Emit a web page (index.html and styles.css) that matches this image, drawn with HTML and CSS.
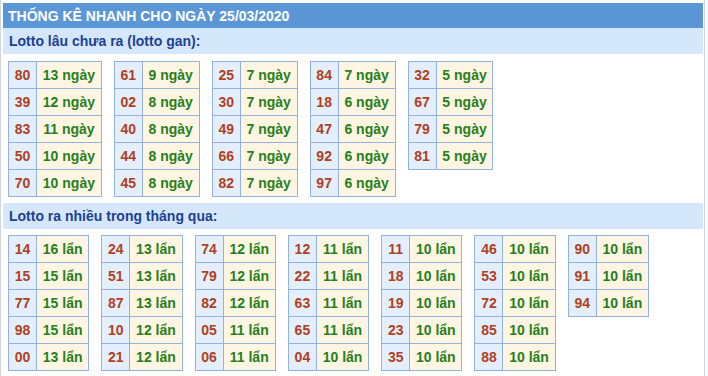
FILE: index.html
```html
<!DOCTYPE html>
<html lang="vi">
<head>
<meta charset="utf-8">
<title>Thống kê nhanh</title>
<link rel="stylesheet" href="styles.css">
</head>
<body>
<div class="wrap">
  <div class="title">THỐNG KÊ NHANH CHO NGÀY 25/03/2020</div>
  <div class="sub">Lotto lâu chưa ra (lotto gan):</div>
  <div class="tables">
    <table class="t"><tr><td class="n">80</td><td class="v">13 ngày</td></tr><tr><td class="n">39</td><td class="v">12 ngày</td></tr><tr><td class="n">83</td><td class="v">11 ngày</td></tr><tr><td class="n">50</td><td class="v">10 ngày</td></tr><tr><td class="n">70</td><td class="v">10 ngày</td></tr></table>
    <table class="t"><tr><td class="n">61</td><td class="v">9 ngày</td></tr><tr><td class="n">02</td><td class="v">8 ngày</td></tr><tr><td class="n">40</td><td class="v">8 ngày</td></tr><tr><td class="n">44</td><td class="v">8 ngày</td></tr><tr><td class="n">45</td><td class="v">8 ngày</td></tr></table>
    <table class="t"><tr><td class="n">25</td><td class="v">7 ngày</td></tr><tr><td class="n">30</td><td class="v">7 ngày</td></tr><tr><td class="n">49</td><td class="v">7 ngày</td></tr><tr><td class="n">66</td><td class="v">7 ngày</td></tr><tr><td class="n">82</td><td class="v">7 ngày</td></tr></table>
    <table class="t"><tr><td class="n">84</td><td class="v">7 ngày</td></tr><tr><td class="n">18</td><td class="v">6 ngày</td></tr><tr><td class="n">47</td><td class="v">6 ngày</td></tr><tr><td class="n">92</td><td class="v">6 ngày</td></tr><tr><td class="n">97</td><td class="v">6 ngày</td></tr></table>
    <table class="t"><tr><td class="n">32</td><td class="v">5 ngày</td></tr><tr><td class="n">67</td><td class="v">5 ngày</td></tr><tr><td class="n">79</td><td class="v">5 ngày</td></tr><tr><td class="n">81</td><td class="v">5 ngày</td></tr></table>
  </div>
  <div class="sub sub2">Lotto ra nhiều trong tháng qua:</div>
  <div class="tables">
    <table class="t"><tr><td class="n">14</td><td class="v">16 lẩn</td></tr><tr><td class="n">15</td><td class="v">15 lẩn</td></tr><tr><td class="n">77</td><td class="v">15 lẩn</td></tr><tr><td class="n">98</td><td class="v">15 lẩn</td></tr><tr><td class="n">00</td><td class="v">13 lẩn</td></tr></table>
    <table class="t"><tr><td class="n">24</td><td class="v">13 lẩn</td></tr><tr><td class="n">51</td><td class="v">13 lẩn</td></tr><tr><td class="n">87</td><td class="v">13 lẩn</td></tr><tr><td class="n">10</td><td class="v">12 lẩn</td></tr><tr><td class="n">21</td><td class="v">12 lẩn</td></tr></table>
    <table class="t"><tr><td class="n">74</td><td class="v">12 lẩn</td></tr><tr><td class="n">79</td><td class="v">12 lẩn</td></tr><tr><td class="n">82</td><td class="v">12 lẩn</td></tr><tr><td class="n">05</td><td class="v">11 lẩn</td></tr><tr><td class="n">06</td><td class="v">11 lẩn</td></tr></table>
    <table class="t"><tr><td class="n">12</td><td class="v">11 lẩn</td></tr><tr><td class="n">22</td><td class="v">11 lẩn</td></tr><tr><td class="n">63</td><td class="v">11 lẩn</td></tr><tr><td class="n">65</td><td class="v">11 lẩn</td></tr><tr><td class="n">04</td><td class="v">10 lẩn</td></tr></table>
    <table class="t"><tr><td class="n">11</td><td class="v">10 lẩn</td></tr><tr><td class="n">18</td><td class="v">10 lẩn</td></tr><tr><td class="n">19</td><td class="v">10 lẩn</td></tr><tr><td class="n">23</td><td class="v">10 lẩn</td></tr><tr><td class="n">35</td><td class="v">10 lẩn</td></tr></table>
    <table class="t"><tr><td class="n">46</td><td class="v">10 lẩn</td></tr><tr><td class="n">53</td><td class="v">10 lẩn</td></tr><tr><td class="n">72</td><td class="v">10 lẩn</td></tr><tr><td class="n">85</td><td class="v">10 lẩn</td></tr><tr><td class="n">88</td><td class="v">10 lẩn</td></tr></table>
    <table class="t"><tr><td class="n">90</td><td class="v">10 lẩn</td></tr><tr><td class="n">91</td><td class="v">10 lẩn</td></tr><tr><td class="n">94</td><td class="v">10 lẩn</td></tr></table>
  </div>
</div>
</body>
</html>
```

FILE: styles.css
```css
html, body {
  margin: 0;
  padding: 0;
  background: #ffffff;
}
body {
  font-family: "Liberation Sans", Arial, sans-serif;
  font-size: 14px;
  font-weight: bold;
}
.wrap {
  width: 700px;
  min-height: 376px;
  box-sizing: content-box;
  padding: 3px 1px 0 2px;
  border-left: 1px solid #cfd5dd;
  border-right: 1px solid #cfd5dd;
}
.title {
  height: 25px;
  line-height: 26px;
  background: #5b97d6;
  color: #ffffff;
  padding-left: 5px;
}
.sub {
  height: 26px;
  line-height: 26px;
  background: #d5e8fb;
  color: #1d3f95;
  padding-left: 6px;
}
.sub2 {
  margin-top: 6px;
}
.tables {
  display: flex;
  align-items: flex-start;
  gap: 12px;
  padding-left: 5px;
  margin-top: 7px;
}
.sub2 + .tables {
  margin-top: 6px;
}
.t {
  border-collapse: collapse;
  border: 1px solid #93b1e3;
}
.t td {
  border: 1px solid #93b1e3;
  height: 26px;
  padding: 0 5.75px;
  line-height: 26px;
  text-align: center;
  box-sizing: border-box;
  white-space: nowrap;
}
.n {
  background: #e4effd;
  color: #b0401e;
}
.v {
  background: #fff5e3;
  color: #25801c;
}
```
